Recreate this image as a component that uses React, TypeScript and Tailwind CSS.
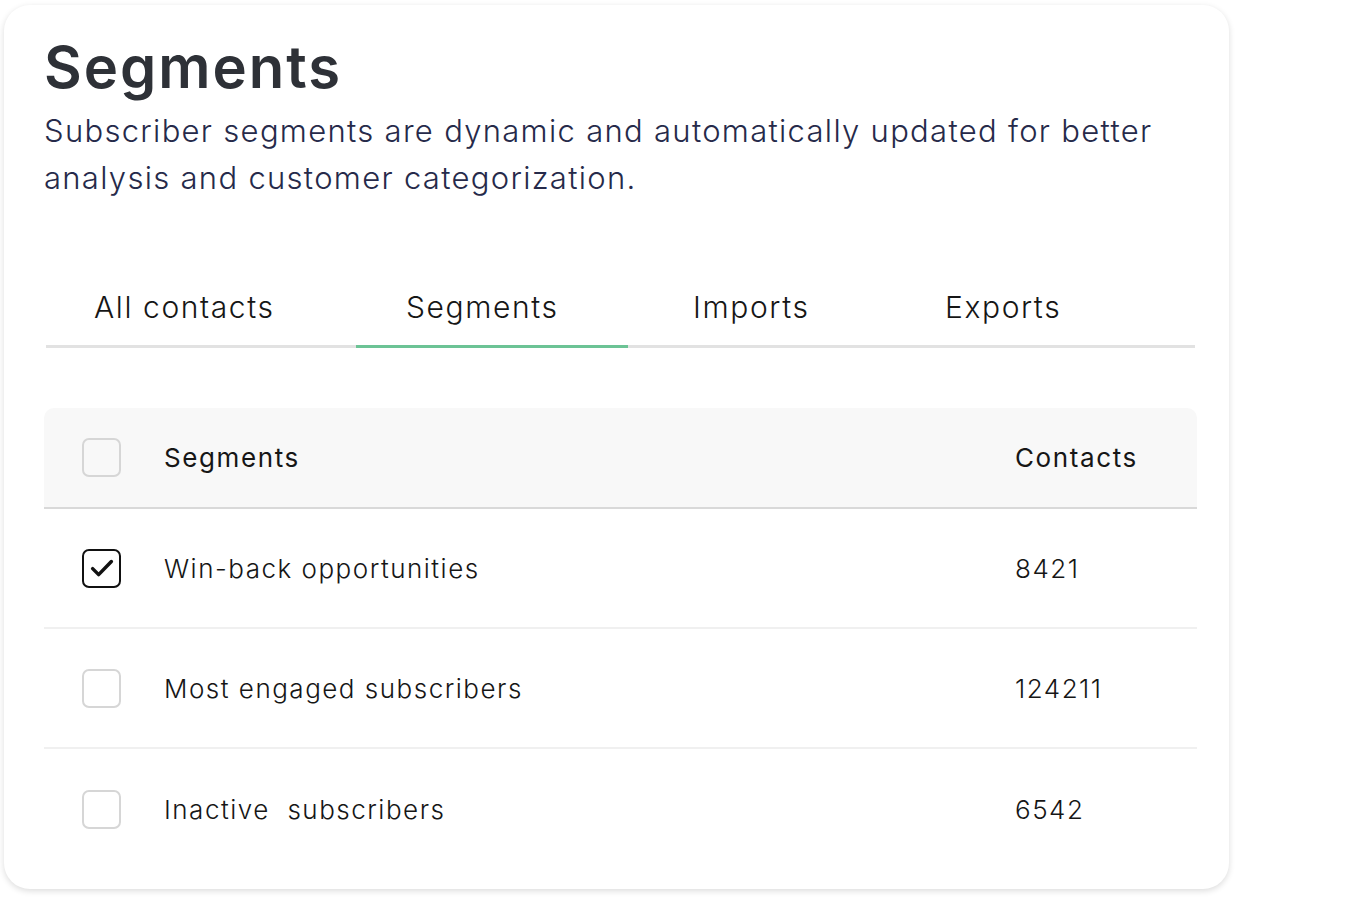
import React from "react";

const font = { fontFamily: "Inter, 'Noto Sans', sans-serif" };

function Checkbox({ checked }: { checked?: boolean }) {
  if (checked) {
    return (
      <div className="flex h-[39px] w-[39px] items-center justify-center rounded-[7px] border-2 border-[#111]">
        <svg width="30" height="30" viewBox="0 0 24 24" fill="none" stroke="#111" strokeWidth="2.8" strokeLinecap="round" strokeLinejoin="round">
          <path d="M4.5 12.5l4.8 4.8L19.5 6.8" />
        </svg>
      </div>
    );
  }
  return <div className="h-[39px] w-[39px] rounded-[7px] border-2 border-[#d6d6d6]" />;
}

const rows = [
  { name: "Win-back opportunities", count: "8421", checked: true },
  { name: "Most engaged subscribers", count: "124211" },
  { name: "Inactive\u00a0 subscribers", count: "6542" },
];

export default function App() {
  return (
    <div className="min-h-screen bg-white pl-[4px] pt-[5px]" style={font}>
      <div className="h-[884px] w-[1225px] rounded-[26px] bg-white pl-[40px] shadow-[0_2px_6px_rgba(0,0,0,0.14)]">
        <h1 className="pt-[26px] text-[58px] font-semibold leading-[72px] tracking-[2px] text-[#2e3137]">Segments</h1>
        <p className="mt-[4px] w-[1170px] text-[31px] font-light leading-[47px] tracking-[1.3px] text-[#262a4a]">
          Subscriber segments are dynamic and automatically updated for better analysis and customer categorization.
        </p>

        <div className="mt-[86px] ml-[2px] flex w-[1149px] border-b-[3px] border-[#e2e2e2] text-[30px] font-light leading-[40px] tracking-[1.6px] text-[#161616]">
          <div className="w-[310px] pb-[18px] pl-[48px]">All contacts</div>
          <div className="-mb-[3px] w-[272px] border-b-[3px] border-[#6cc395] pb-[18px] pl-[50px]">Segments</div>
          <div className="w-[252px] pb-[18px] pl-[65px]">Imports</div>
          <div className="pb-[18px] pl-[65px]">Exports</div>
        </div>

        <div className="mt-[60px] w-[1153px]">
          <div className="flex h-[101px] items-center rounded-t-[10px] border-b-2 border-[#d9d9d9] bg-[#f8f8f8] text-[26px] tracking-[1.6px] text-[#161616]">
            <div className="w-[120px] pl-[38px]"><Checkbox /></div>
            <div className="flex-1">Segments</div>
            <div className="w-[182px]">Contacts</div>
          </div>
          {rows.map((r, i) => (
            <div key={i} className={`flex h-[120px] items-center text-[26px] font-light tracking-[1.5px] text-[#161616] ${i < rows.length - 1 ? "border-b-2 border-[#f0f0f0]" : ""}`}>
              <div className="w-[120px] pl-[38px]"><Checkbox checked={r.checked} /></div>
              <div className="flex-1">{r.name}</div>
              <div className="w-[182px]">{r.count}</div>
            </div>
          ))}
        </div>
      </div>
    </div>
  );
}
